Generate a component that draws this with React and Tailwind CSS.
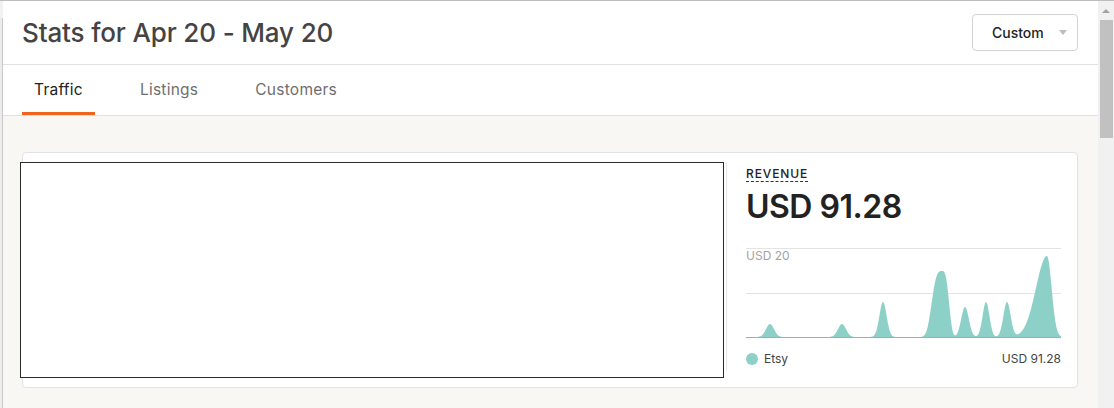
import React from 'react';

// peaks: center, left sigma, right sigma, height, exponent (coords relative to chart origin x=745)
const PEAKS = [
    { c: 24, sl: 4, sr: 4, h: 13, p: 2 },
    { c: 96, sl: 4, sr: 4, h: 13, p: 2 },
    { c: 137, sl: 3.6, sr: 3.6, h: 35, p: 2 },
    { c: 196, sl: 9.5, sr: 6.5, h: 66, p: 3.2 },
    { c: 219, sl: 3.8, sr: 3.8, h: 30, p: 2 },
    { c: 240, sl: 3.4, sr: 3.4, h: 35, p: 2 },
    { c: 261, sl: 3.6, sr: 3.6, h: 35, p: 2 },
    { c: 301, sl: 11, sr: 4.6, h: 81, p: 2 },
];

function buildArea(width, base) {
    const pts = [];
    for (let x = 0; x <= width; x += 0.5) {
        let y = 0;
        PEAKS.forEach(pk => {
            const s = x < pk.c ? pk.sl : pk.sr;
            y += pk.h * Math.exp(-Math.pow(Math.abs(x - pk.c) / s, pk.p) / 2);
        });
        pts.push(`${x.toFixed(1)},${(base - y).toFixed(2)}`);
    }
    return `M0,${base} L${pts.join(' L')} L${width},${base} Z`;
}

function RevenueChart() {
    const w = 315;
    return (
        <svg width={w} height="92" viewBox={`0 0 ${w} 92`} className="block">
            <line x1="0" y1="0.5" x2={w} y2="0.5" stroke="#e3e3e3" />
            <line x1="0" y1="45.5" x2={w} y2="45.5" stroke="#e3e3e3" />
            <path d={buildArea(w, 89)} fill="#8dd0c7" />
            <line x1="0" y1="89.5" x2={w} y2="89.5" stroke="#a8a8a8" />
            <text x="0" y="12" fontSize="12" fill="#a3a3a3" fontFamily="Inter, sans-serif">USD 20</text>
        </svg>
    );
}

function Tab({ label, active }) {
    return (
        <div className={`h-full flex items-center px-[12px] border-b-[3px] ${active ? 'border-[#f1641e] text-[#222]' : 'border-transparent text-[#6e6e6e]'}`}>
            <span className="text-[15.5px] leading-[20px] pt-[2px] tracking-[0.25px]">{label}</span>
        </div>
    );
}

export default function App() {
    return (
        <div className="w-[1114px] h-[408px] overflow-hidden flex flex-col bg-white border-t border-[#bdbdbd] font-['Inter',sans-serif]">
            <div className="flex flex-1 min-h-0">
                {/* window edge */}
                <div className="w-[3px] flex flex-col">
                    <div className="h-[17px] bg-[#f2f2f2]" />
                    <div className="flex-1 bg-[#ececec] border-r border-[#c9c9c9]" />
                </div>

                <main className="flex-1 flex flex-col min-w-0">
                    {/* Header */}
                    <div className="h-[64px] flex items-center justify-between pl-[19px] pr-[20px] border-b border-[#e1e1e1]">
                        <h1 className="text-[26px] font-medium text-[#444] tracking-[-0.15px]">Stats for Apr 20 - May 20</h1>
                        <button className="w-[106px] h-[37px] border border-[#d3d3d3] rounded-[4px] flex items-center pl-[19px] text-[14px] font-medium text-[#222]">
                            Custom
                            <span className="ml-[15px] w-0 h-0 border-l-[4px] border-r-[4px] border-t-[5px] border-l-transparent border-r-transparent border-t-[#bdbdbd]" />
                        </button>
                    </div>

                    {/* Tabs */}
                    <div className="h-[51px] flex items-stretch gap-[33px] pl-[19px] border-b border-[#e1e1e1]">
                        <Tab label="Traffic" active />
                        <Tab label="Listings" />
                        <Tab label="Customers" />
                    </div>

                    {/* Body */}
                    <div className="flex-1 bg-[#f8f7f4] pt-[36px] pl-[19px] pr-[20px]">
                        <div className="bg-white border border-[#e3e3e3] rounded-[4px] flex pt-[9px] pb-[9px] pr-[17px]">
                            <div className="-ml-[3px] w-[704px] h-[216px] border border-[#2a2a2a] bg-white shrink-0" />
                            <div className="ml-[2px] mt-[1px] h-[207px] border-l border-[#e6e6e6] pl-[19px] flex-1 flex flex-col">
                                <div className="pt-[3px] text-[12px] leading-[16px]">
                                    <span className="font-medium tracking-[0.9px] text-[#222] border-b border-dashed border-[#333]">REVENUE</span>
                                </div>
                                <div className="mt-[5px] text-[32px] font-semibold text-[#222] tracking-[-0.5px] leading-[40px]">USD 91.28</div>
                                <div className="mt-[21px]">
                                    <RevenueChart />
                                </div>
                                <div className="mt-[11px] flex items-center justify-between text-[12px] leading-[16px] text-[#444]">
                                    <div className="flex items-center">
                                        <span className="w-[12px] h-[12px] rounded-full bg-[#8dd0c7]" />
                                        <span className="ml-[6px]">Etsy</span>
                                    </div>
                                    <span>USD 91.28</span>
                                </div>
                            </div>
                        </div>
                    </div>
                </main>

                {/* Scrollbar */}
                <div className="w-[16px] bg-[#f1f1f1] flex flex-col items-center">
                    <div className="h-[18px] flex items-center justify-center pt-[2px]">
                        <span className="w-0 h-0 border-l-[4px] border-r-[4px] border-b-[4px] border-l-transparent border-r-transparent border-b-[#a3a3a3]" />
                    </div>
                    <div className="mt-[1px] w-[13px] h-[118px] bg-[#c1c1c1]" />
                </div>
            </div>
        </div>
    );
}
